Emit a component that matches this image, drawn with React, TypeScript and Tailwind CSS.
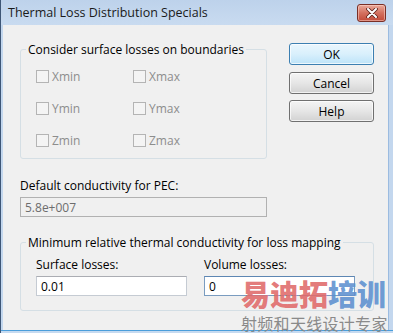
import React from "react";

function Check({ label }: { label: string }) {
  return (
    <div className="flex items-center h-[15px] gap-[3px]">
      <div className="w-[13px] h-[13px] border border-[#b4b4b4] bg-[#f4f4f4]" />
      <span className="leading-[15px] text-[#8d8d8d]">{label}</span>
    </div>
  );
}

function Btn({ label, primary }: { label: string; primary?: boolean }) {
  return (
    <div
      className={
        primary
          ? "h-[22px] w-[85px] rounded-[3px] border border-[#3c7fb1] bg-gradient-to-b from-[#eaf6fd] via-[#d9f0fc] to-[#bde3f8] shadow-[inset_0_0_0_1px_rgba(255,255,255,0.7)] flex items-center justify-center leading-[15px]"
          : "h-[22px] w-[85px] rounded-[3px] border border-[#707070] bg-gradient-to-b from-[#f4f4f4] via-[#e6e6e6] to-[#d2d2d2] shadow-[inset_0_0_0_1px_rgba(255,255,255,0.7)] flex items-center justify-center leading-[15px]"
      }
    >
      {label}
    </div>
  );
}

export default function App() {
  return (
    <div className="relative w-[393px] h-[333px] overflow-hidden bg-[#c3d7ee] border-l border-[#3e5676] flex flex-col font-['Open_Sans',sans-serif] text-[12px] text-black">
      {/* title bar */}
      <div className="h-[25px] shrink-0 flex items-start justify-between pl-[7px] pr-[7px] bg-gradient-to-b from-[#bdd2eb] to-[#c9dbf0]">
        <span className="mt-[4px] text-[12.5px] leading-[17px] text-[#1a1a1a]">
          Thermal Loss Distribution Specials
        </span>
        <div className="mt-[4px] w-[29px] h-[18px] rounded-[3px] border border-[#7a2f26] bg-gradient-to-b from-[#e9a99b] via-[#d3705f] to-[#c24a39] shadow-[inset_0_0_0_1px_rgba(255,220,210,0.5)] flex items-center justify-center">
          <svg width="12" height="10" viewBox="0 0 12 10">
            <path d="M2 1 L10 9 M10 1 L2 9" stroke="#5a2019" strokeWidth="3.6" strokeLinecap="round" />
            <path d="M2 1 L10 9 M10 1 L2 9" stroke="#ffffff" strokeWidth="2" strokeLinecap="round" />
          </svg>
        </div>
      </div>

      {/* body */}
      <div className="flex-1 ml-[2px] mr-[4px] bg-[#f0f0f0] border-r border-[#9bbbe0] pl-[17px] pt-[17px]">
        <div className="flex">
          <fieldset className="w-[247px] border border-[#d5dfe5] rounded-[3px] pl-[15px] pt-[12px] pb-[10px]">
            <legend className="-ml-[10px] px-[2px] leading-[15px]">Consider surface losses on boundaries</legend>
            <div className="grid grid-cols-[97px_97px] gap-y-[17px]">
              <Check label="Xmin" />
              <Check label="Xmax" />
              <Check label="Ymin" />
              <Check label="Ymax" />
              <Check label="Zmin" />
              <Check label="Zmax" />
            </div>
          </fieldset>
          <div className="ml-[22px] mt-[1px] flex flex-col">
            <Btn label="OK" primary />
            <div className="h-[7px]" />
            <Btn label="Cancel" />
            <div className="h-[6px]" />
            <Btn label="Help" />
          </div>
        </div>

        <div className="mt-[19px] leading-[15px]">Default conductivity for PEC:</div>
        <div className="mt-[4px] w-[247px] h-[20px] border border-[#b1b1b1] bg-[#f0f0f0] pl-[4px] flex items-center text-[#6d6d6d] leading-[15px]">
          5.8e+007
        </div>

        <fieldset className="mt-[18px] w-[354px] border border-[#d5dfe5] rounded-[3px] pl-[15px] pt-[7px] pb-[14px]">
          <legend className="-ml-[10px] px-[2px] leading-[15px]">
            Minimum relative thermal conductivity for loss mapping
          </legend>
          <div className="flex">
            <div className="w-[168px] flex flex-col">
              <span className="leading-[15px]">Surface losses:</span>
              <div className="mt-[4px] w-[151px] h-[20px] border border-[#c5cbd3] border-t-[#abadb3] bg-white pl-[4px] flex items-center leading-[15px]">
                0.01
              </div>
            </div>
            <div className="flex flex-col">
              <span className="leading-[15px]">Volume losses:</span>
              <div className="mt-[4px] w-[151px] h-[20px] border border-[#7a9cc0] border-t-[#5d86b3] bg-white pl-[4px] flex items-center leading-[15px]">
                0
              </div>
            </div>
          </div>
        </fieldset>
      </div>

      {/* bottom frame */}
      <div className="h-[3px] shrink-0 border-t border-[#4a9edb] bg-[#c6daf0]" />

      {/* watermark overlay */}
      <div className="absolute left-[240px] top-[278px] flex flex-col items-start font-['Noto_Sans_CJK_SC',sans-serif] pointer-events-none">
        <div className="text-[29px] leading-[31px] font-black tracking-[0px] whitespace-nowrap">
          <span className="text-[#e06a6a]/90">易迪拓</span>
          <span className="text-[#5d8fcf]/90">培训</span>
        </div>
        <div className="text-[16px] leading-[18px] mt-[5px] text-[#8a8a8a] whitespace-nowrap tracking-[0.3px]">
          射频和天线设计专家
        </div>
      </div>
    </div>
  );
}
